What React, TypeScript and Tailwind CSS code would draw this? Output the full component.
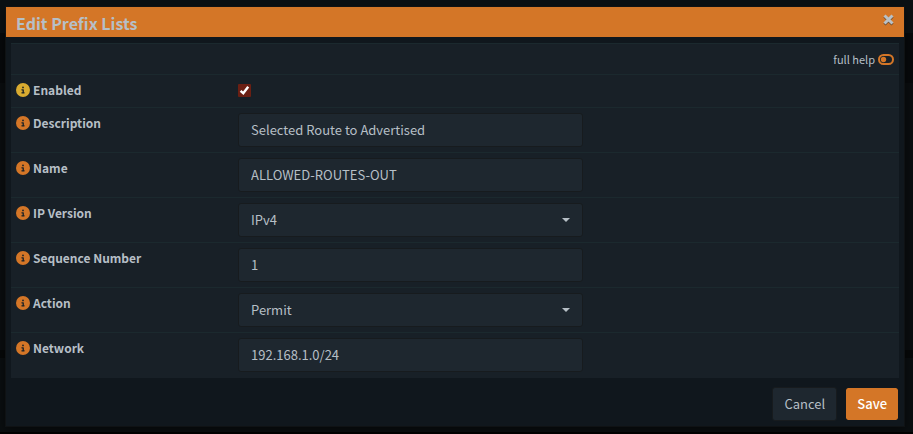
import { useState } from "react";
import { FaCircleInfo } from "react-icons/fa6";

// Data
// -----------------------------------------------------------------------------

type Field = {
  id: string;
  label: string;
  value: string;
  options?: string[];
};

const fields: Field[] = [
  {
    id: "description",
    label: "Description",
    value: "Selected Route to Advertised",
  },
  { id: "name", label: "Name", value: "ALLOWED-ROUTES-OUT" },
  {
    id: "version",
    label: "IP Version",
    value: "IPv4",
    options: ["IPv4", "IPv6"],
  },
  { id: "seqnumber", label: "Sequence Number", value: "1" },
  {
    id: "action",
    label: "Action",
    value: "Permit",
    options: ["Permit", "Deny"],
  },
  { id: "network", label: "Network", value: "192.168.1.0/24" },
];

// Components
// -----------------------------------------------------------------------------

const controlClass =
  "block w-full h-[34px] px-3 rounded-[3px] border border-[#171b1e] bg-[#1e272f] text-[#b6bfc6] appearance-none outline-none";

function FieldLabel({
  id,
  label,
  active,
}: {
  id: string;
  label: string;
  active?: boolean;
}) {
  return (
    <div className="flex items-center gap-[3px] h-5">
      <button type="button" aria-label={`Help for ${label}`}>
        <FaCircleInfo
          className={
            active ? "size-[14px] text-[#d9ab30]" : "size-[14px] text-[#d47627]"
          }
        />
      </button>
      <label htmlFor={id} className="text-xs leading-5 font-bold">
        {label}
      </label>
    </div>
  );
}

function FieldControl({ field }: { field: Field }) {
  if (!field.options) {
    return (
      <input
        id={field.id}
        type="text"
        defaultValue={field.value}
        className={`${controlClass} pb-0.5`}
      />
    );
  }

  return (
    <div className="relative">
      <select
        id={field.id}
        defaultValue={field.value}
        className={controlClass}
      >
        {field.options.map((option) => (
          <option key={option}>{option}</option>
        ))}
      </select>
      <svg
        viewBox="0 0 8 4"
        className="absolute right-[13px] top-[15px] w-2 h-1 fill-[#b6bfc6] pointer-events-none"
      >
        <path d="M0 0h8L4 4z" />
      </svg>
    </div>
  );
}

// Default export
// -----------------------------------------------------------------------------

export default function App() {
  const [enabled, setEnabled] = useState(true);

  return (
    <div className="min-h-screen bg-[linear-gradient(#0b1013_0_33px,#07090b_33px_83px,#0a0d0f_83px_350px,#060809_350px_358px,#0a0e10_358px_432px,#000_432px)] pt-[7px] pl-[6px] pr-[9px] font-['Noto_Sans_CJK_SC','Open_Sans',sans-serif] text-[13px] leading-5 text-[#b6bfc6]">
      <form
        role="dialog"
        aria-labelledby="dialog-title"
        className="bg-[#10171d] shadow-[0_0_0_1px_#0f1214,0_3px_9px_#00000080]"
        onSubmit={(event) => event.preventDefault()}
      >
        <header className="flex items-start justify-between h-[30px] px-[10px] bg-[#d47627]">
          <h4 id="dialog-title" className="text-base leading-8 font-bold">
            Edit Prefix Lists
          </h4>
          <button type="button" aria-label="Close" className="mt-[7px]">
            <svg
              viewBox="0 0 11 11"
              className="size-[11px] drop-shadow-[0_1px_0_#6b4a2d]"
              fill="none"
              stroke="#b9c0c5"
              strokeWidth="3"
            >
              <path d="M1.5 1.5l8 8M9.5 1.5l-8 8" />
            </svg>
          </button>
        </header>

        <div className="px-[5px] pt-[6px]">
          <table className="w-full table-fixed border-collapse bg-[#182027]">
            <colgroup>
              <col className="w-[25%]" />
              <col className="w-[40%]" />
              <col className="w-[35%]" />
            </colgroup>
            <tbody>
              <tr className="h-[31px] border-t border-[#1b292e]">
                <td colSpan={3} className="px-[5px]">
                  <div className="flex items-center justify-end gap-[3px] text-[11px]">
                    <span id="full-help">full help</span>
                    <button type="button" aria-labelledby="full-help">
                      <svg viewBox="0 0 16 11" className="w-4 h-[11px]">
                        <rect
                          x="1"
                          y="1"
                          width="14"
                          height="9"
                          rx="4.5"
                          fill="none"
                          stroke="#d47627"
                          strokeWidth="2"
                        />
                        <circle cx="5.5" cy="5.5" r="2.7" fill="#d47627" />
                      </svg>
                    </button>
                  </div>
                </td>
              </tr>
              <tr className="h-[33px] border-t border-[#1b292e]">
                <td className="px-[5px] pb-0.5">
                  <FieldLabel id="enabled" label="Enabled" active />
                </td>
                <td className="px-[5px] pb-0.5" colSpan={2}>
                  <div className="relative size-[13px]">
                    <input
                      id="enabled"
                      type="checkbox"
                      checked={enabled}
                      onChange={(event) => setEnabled(event.target.checked)}
                      className="block size-[13px] appearance-none rounded-[1px] bg-[#6b1f13]"
                    />
                    {enabled && (
                      <svg
                        viewBox="0 0 13 13"
                        className="absolute inset-0 size-[13px] pointer-events-none"
                        fill="none"
                        stroke="#fff"
                        strokeWidth="2.4"
                      >
                        <path d="M2.6 6.8l2.7 2.5L10.2 2.8" />
                      </svg>
                    )}
                  </div>
                </td>
              </tr>
              {fields.map((field) => (
                <tr
                  key={field.id}
                  className="h-[45px] border-t border-[#1b292e] align-top"
                >
                  <td className="px-[5px] pt-[5px]">
                    <FieldLabel id={field.id} label={field.label} />
                  </td>
                  <td className="px-[5px] pt-[5px]">
                    <FieldControl field={field} />
                  </td>
                  <td />
                </tr>
              ))}
            </tbody>
          </table>
        </div>

        <footer className="flex justify-end gap-2 pt-[9px] pb-[5px] pr-[5px]">
          <button
            type="button"
            className="h-[34px] px-[11px] rounded-[3px] border border-[#171b1e] bg-[#1e272f]"
          >
            Cancel
          </button>
          <button
            type="submit"
            className="h-[34px] px-[11px] rounded-[3px] border border-[#10171d] bg-[#d47627] bg-clip-padding font-medium text-white"
          >
            Save
          </button>
        </footer>
      </form>
    </div>
  );
}
